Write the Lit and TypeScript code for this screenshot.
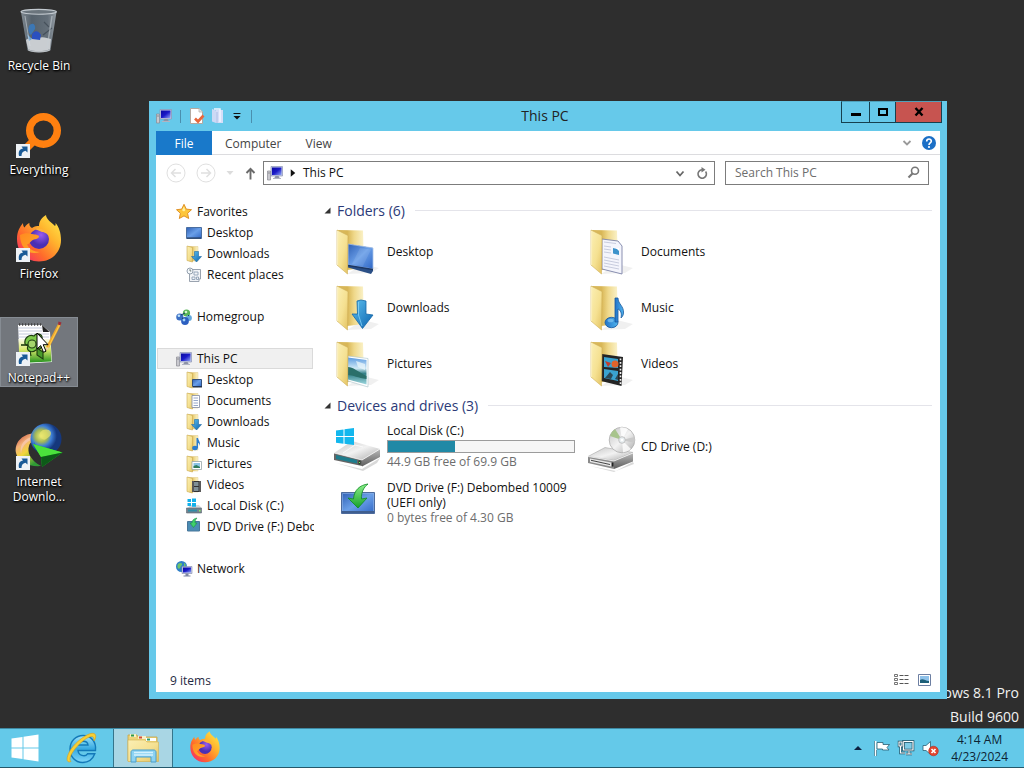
import { LitElement, html, css, svg, nothing } from "lit";
import { customElement, state } from "lit/decorators.js";
import { classMap } from "lit/directives/class-map.js";

/* ---------- shared gradients ---------- */
const defs = html`<svg class="defs" aria-hidden="true">
  <defs>
    <linearGradient id="flap" x1="0" y1="0" x2="1" y2="1"><stop offset="0" stop-color="#fbefb4" /><stop offset=".55" stop-color="#f5e192" /><stop offset="1" stop-color="#e3c262" /></linearGradient>
    <linearGradient id="back" x1="0" y1="0" x2="1" y2="0"><stop offset="0" stop-color="#d9b95e" /><stop offset=".36" stop-color="#d8b655" /><stop offset=".62" stop-color="#efd88a" /><stop offset="1" stop-color="#fbf3cc" /></linearGradient>
    <linearGradient id="screen" x1="0" y1="0" x2="1" y2="1"><stop offset="0" stop-color="#2e5fb4" /><stop offset=".5" stop-color="#6a9fe8" /><stop offset="1" stop-color="#2f66c4" /></linearGradient>
    <linearGradient id="blueArrow" x1="0" y1="0" x2="1" y2="1"><stop offset="0" stop-color="#5cc0f0" /><stop offset="1" stop-color="#0c63ae" /></linearGradient>
    <linearGradient id="photo" x1="0" y1="0" x2="0" y2="1"><stop offset="0" stop-color="#5c9be0" /><stop offset=".4" stop-color="#cfe9f6" /><stop offset=".6" stop-color="#2f7d84" /><stop offset="1" stop-color="#9fd8e0" /></linearGradient>
    <linearGradient id="metal" x1="0" y1="0" x2="1" y2="1"><stop offset="0" stop-color="#c4c4c4" /><stop offset=".5" stop-color="#f2f2f2" /><stop offset="1" stop-color="#aaaaaa" /></linearGradient>
    <linearGradient id="metalSide" x1="0" y1="0" x2="0" y2="1"><stop offset="0" stop-color="#b8b8b8" /><stop offset="1" stop-color="#5e5e5e" /></linearGradient>
    <linearGradient id="green" x1="0" y1="0" x2="0" y2="1"><stop offset="0" stop-color="#8cf08a" /><stop offset="1" stop-color="#16a02a" /></linearGradient>
    <linearGradient id="fox" x1="1" y1="0" x2="0" y2="1"><stop offset="0" stop-color="#fff14f" /><stop offset=".35" stop-color="#ffb52e" /><stop offset=".65" stop-color="#ff6b2b" /><stop offset="1" stop-color="#f0197a" /></linearGradient>
    <linearGradient id="foxHead" x1="0" y1="0" x2="1" y2="1"><stop offset="0" stop-color="#ff8a20" /><stop offset="1" stop-color="#ffab2a" /></linearGradient>
    <radialGradient id="violet" cx=".6" cy=".3"><stop offset="0" stop-color="#9a5cf0" /><stop offset="1" stop-color="#4a2fb4" /></radialGradient>
    <linearGradient id="glass" x1="0" y1="0" x2="1" y2="0"><stop offset="0" stop-color="#8f9aa3" /><stop offset=".3" stop-color="#5c6a76" /><stop offset=".75" stop-color="#6d7a86" /><stop offset="1" stop-color="#a8b2ba" /></linearGradient>
    <radialGradient id="globe" cx=".35" cy=".4"><stop offset="0" stop-color="#eef07a" /><stop offset=".4" stop-color="#a3b856" /><stop offset=".65" stop-color="#3d7fd8" /><stop offset="1" stop-color="#15377c" /></radialGradient>
    <linearGradient id="rainbow" x1="0" y1="0" x2=".6" y2="1"><stop offset="0" stop-color="#b8322e" /><stop offset=".35" stop-color="#f3b27a" /><stop offset=".6" stop-color="#f2d63c" /><stop offset="1" stop-color="#2f9a35" /></linearGradient>
    <linearGradient id="grass" x1="0" y1="0" x2="0" y2="1"><stop offset="0" stop-color="#fbfbe8" /><stop offset=".45" stop-color="#d7e86a" /><stop offset="1" stop-color="#1f8f1c" /></linearGradient>
    <linearGradient id="ie" x1="0" y1="0" x2="0" y2="1"><stop offset="0" stop-color="#9fe4fb" /><stop offset=".5" stop-color="#35a9e0" /><stop offset="1" stop-color="#7fd6f8" /></linearGradient>
    <linearGradient id="note" x1="0" y1="0" x2="1" y2="0"><stop offset="0" stop-color="#2273c8" /><stop offset="1" stop-color="#4fb4ee" /></linearGradient>
    <linearGradient id="monitor" x1="0" y1="0" x2="1" y2="1"><stop offset="0" stop-color="#0a0aa0" /><stop offset=".5" stop-color="#1a1ac8" /><stop offset="1" stop-color="#8fa4f4" /></linearGradient>
  </defs>
</svg>`;

const icon = (size: number, box: number, body: unknown) =>
  html`<svg class="ic" width=${size} height=${size} viewBox="0 0 ${box} ${box}" aria-hidden="true">${body}</svg>`;

/* ---------- large folder icons ---------- */
const folderBack = svg`<path d="M14 46 L38 45 L46 40 L30 36Z" fill="#000" opacity=".06"/><path d="M5 2 L30 2.5 L31 40 L14 42 Z" fill="url(#back)"/>`;
const folderFlap = svg`<path d="M4 2 L15 7.5 L14.5 46 L4 37Z" fill="url(#flap)" stroke="#cfae58" stroke-width=".6"/><path d="M4.6 3 V37" stroke="#fff6cf" stroke-width=".8"/>`;
const overlays: Record<string, unknown> = {
  Desktop: svg`<path d="M15 16 L40 20 V43 L38 46 L15 39.5Z" fill="#2a4f86"/><path d="M15 16 L40 20 V41 L15 37Z" fill="url(#screen)" stroke="#a9c4ea" stroke-width=".8"/><path d="M15 37.5 L40 41.5" stroke="#1b3765" stroke-width="1.6"/><path d="M27 20 L38 21.5 L30 38 L19 36Z" fill="#fff" opacity=".1"/>`,
  Downloads: svg`<path d="M24 17 L28 16 L33 17 V30 L40 31 L29.5 44.5 L19 30 L24.5 30Z" fill="url(#blueArrow)" stroke="#1568a8" stroke-width=".8"/><path d="M25.5 18 V31 L29 42" stroke="#8edcff" stroke-width="1" fill="none" opacity=".7"/>`,
  Pictures: svg`<path d="M15 16 L35 18.5 V47 L15 41Z" fill="#fff" stroke="#aac3c9" stroke-width=".6"/><path d="M15 17.500 L33.500 20 V44.500 L15 39.500Z" fill="url(#photo)"/><path d="M15 27 C20 27 24 31 33.500 36 V39 C25 38 20 35 15 35Z" fill="#2a6f6a"/><path d="M23 21 L32 24 V30 L25 27Z" fill="#e9f5fb" opacity=".75"/>`,
  Documents: svg`<path d="M15 11 L31 13 L35 18 V46 L15 41Z" fill="#f4f5fc" stroke="#7d83a8" stroke-width=".9"/><path d="M17 14 L29 15.500 M17 18 L24 19 M17 21 L24 22 M17 24 L24 25 M17 29 L32 32 M17 32 L32 35 M17 35 L32 38 M17 38 L32 41" stroke="#c3c7da" stroke-width=".9"/><path d="M26 20 L32 21.500 V27 L26 25.500Z" fill="#3c92cb"/><path d="M29 20 h3 v3z" fill="#fff"/>`,
  Music: svg`<ellipse cx="24.500" cy="38.500" rx="6.500" ry="5.200" fill="url(#note)" stroke="#16579c" stroke-width=".8"/><path d="M28 38 V14 L31 14 C31 20 37 22 36.500 29 C36.300 32 34.500 33.500 34 34 C35 29 33.500 26 31 25 V38Z" fill="url(#note)" stroke="#16579c" stroke-width=".8"/><ellipse cx="23.500" cy="36.500" rx="3" ry="1.800" fill="#8fd0f6" opacity=".6"/>`,
  Videos: svg`<path d="M15 14 L36 17 L34.500 46 L14 41Z" fill="#242424"/><path d="M17 17 L31 19 V28 L17 27Z M17 29 L31 31 V41 L17 38Z" fill="#3aa3d0"/><circle cx="28" cy="24" r="3.500" fill="#e0632a"/><path d="M18 21 l6 2 -3 4z" fill="#c23c2c"/><path d="M18 38 l5-6 3 3 -2 4z M28 39 l3-5 v6z" fill="#2d4a57"/><path d="M33.500 18.500 V45" stroke="#f2f2f2" stroke-width="1.600" stroke-dasharray="1.800 1.600"/>`,
};
const bigFolder = (n: string) => icon(48, 48, svg`${folderBack}${n === "Documents" || n === "Desktop" || n === "Pictures" || n === "Videos" ? svg`${overlays[n]}${folderFlap}` : svg`${folderFlap}${overlays[n]}`}`);

const winLogo = svg`<path d="M3 7.500 L10.500 6.500 V13 H3Z M11.500 6.300 L21 5 V13 H11.500Z M3 14 H10.500 V20.700 L3 19.700Z M11.500 14 H21 V22 L11.500 20.800Z" fill="#12b7ee"/>`;
const bigDisk = icon(48, 48, svg`
  <path d="M3 40 L29 46 L47 35 L44 40 L30 48Z" fill="#000" opacity=".15"/>
  <path d="M1 30 L19 18 L47 26 L29 37Z" fill="url(#metal)"/><path d="M1 30 L29 37 V43 L1 37Z" fill="#666"/><path d="M3 32 L24 37 V40.500 L3 36Z" fill="#1f7c8c"/><path d="M29 37 L47 26 V34 L29 43.500Z" fill="url(#metalSide)"/><path d="M25.500 37.500 h2 v4 h-2z" fill="#2b3b2b"/><path d="M26 39 h1 v1 h-1z" fill="#6dff4f"/><path d="M1 30 L29 37 L47 26" fill="none" stroke="#fff" stroke-width=".7"/><path d="M10 30 L22 22 L30 24" stroke="#fff" fill="none" opacity=".7"/>${winLogo}`);
const bigCd = icon(48, 48, svg`
  <path d="M3 43 L27 49 L46 39 L47 41 L29 48Z" fill="#000" opacity=".15"/>
  <path d="M1 33.500 L18 24.500 L46 29.500 L27 37.500Z" fill="url(#metal)" stroke="#9a9a9a" stroke-width=".5"/>
  <circle cx="35" cy="17" r="12.800" fill="url(#metal)" stroke="#a6a6a6" stroke-width=".7"/><path d="M35 17 L23 13 A12.800 12.800 0 0 1 28 6Z" fill="#a8c48c"/><path d="M35 17 L33 4.500 A12.800 12.800 0 0 1 41 6Z M35 17 L44 26 A12.800 12.800 0 0 1 36 29.500Z" fill="#fff" opacity=".8"/><path d="M35 17 L47.500 14 A12.800 12.800 0 0 1 47.500 20Z" fill="#c9c9c9"/><circle cx="35" cy="17" r="3.300" fill="#e8eef0" stroke="#b5b5b5" stroke-width=".8"/><circle cx="35" cy="17" r="1.300" fill="#fff"/>
  <path d="M1 33.500 L27 38 V46 L1 40Z" fill="#8b8b8b"/><path d="M3 35.500 L24 39.500 V43.500 L3 39Z" fill="#e8e8e8"/><path d="M4 37.300 L23 41.500" stroke="#444" stroke-width="1"/><path d="M27 38 L46 30 V38.500 L27 46Z" fill="url(#metalSide)"/><path d="M25 39.500 h1.500 v4 h-1.500z" fill="#222"/><path d="M1 33.500 L27 38 L46 30" fill="none" stroke="#fafafa" stroke-width=".7"/>`);
const bigDvd = icon(48, 48, svg`
  <path d="M8.500 13.500 H41.500 V34.500 H8.500Z" fill="url(#screen)" stroke="#4c6a9c"/><path d="M9.500 14.500 H40.500 V33.500 H9.500Z" fill="none" stroke="#8fb2e6" stroke-width=".6"/><path d="M9 32 H41 V34 H9Z" fill="#3f5e8f"/>
  <path d="M35 5 C27 6 21 11 20.500 20 L15 19 L25 29 L34 19 L28.500 20 C28 13 31 8 35 5Z" fill="url(#green)" stroke="#0e8a24" stroke-width=".8"/>`);

/* ---------- 16px icons ---------- */
const smallFolder = svg`<path d="M2 .500 H12 V15 H3Z" fill="url(#back)" stroke="#dcc177" stroke-width=".4"/><path d="M1 0 L6.500 1.500 V16 L1 14.500Z" fill="url(#flap)" stroke="#cba94e" stroke-width=".6"/>`;
const smallOver: Record<string, unknown> = {
  Desktop: svg`<path d="M6.500 7.500 H15.500 V14.500 H6.500Z" fill="url(#screen)" stroke="#33507c"/><path d="M7 14 h9 v1.500 h-9z" fill="#23344e"/>`,
  Documents: svg`<path d="M6 2.500 H13.500 V14.500 H6Z" fill="#fff" stroke="#8d95ab" stroke-width=".9"/><path d="M7.500 5 h4.500 M7.500 7.500 h4.500 M7.500 10 h4.500 M7.500 12.500 h4.500" stroke="#7e93bd" stroke-width=".8"/>`,
  Downloads: svg`<path d="M8.500 5.500 h4 v5 h3 L10.500 16 L5.500 10.500 h3Z" fill="url(#blueArrow)" stroke="#1c6aa6" stroke-width=".6"/>`,
  Music: svg`<ellipse cx="9" cy="13" rx="2.800" ry="2.200" fill="#2a7cce"/><path d="M10.500 13 V3 h1.500 C12.500 6 15 7 13.500 11 C13.500 9 13 8 12 8 V13Z" fill="#2a7cce"/>`,
  Pictures: svg`<path d="M6 5.500 H15.500 V13.500 H6Z" fill="#fff" stroke="#98a6a8" stroke-width=".8"/><path d="M7.500 7 h6.500 v5 h-6.500z" fill="#8cc4e6"/><path d="M7.500 10 l3-1 3.500 2 v1 h-6.500z" fill="#2f7c5c"/>`,
  Videos: svg`<path d="M6 4 H15 V15 H6Z" fill="#333"/><path d="M8 5 h4.500 v4 h-4.500z M8 10 h4.500 v4 h-4.500z" fill="#7f8f96"/><path d="M14 4.500 V15 M7 4.500 V15" stroke="#ddd" stroke-width=".9" stroke-dasharray="1 1"/>`,
};
const folder16 = (n: string) => icon(16, 16, svg`${smallFolder}${smallOver[n]}`);
const pc = icon(16, 16, svg`<path d="M.500 6 h3 v9 h-3z" fill="#c9c9cf" stroke="#8a8a92" stroke-width=".7"/><path d="M1.500 8 h1" stroke="#555"/><path d="M4 1.500 H15.500 V11 H4Z" fill="#c4cbe8" stroke="#8b93b4" stroke-width=".7"/><path d="M5 2.500 H14.500 V10 H5Z" fill="url(#monitor)"/><path d="M8.500 11 h3 l1.500 2.500 h-6z" fill="#8d93a6"/><path d="M6 13.500 h8" stroke="#b0b4c2"/>`);
const star = icon(16, 16, svg`<path d="M8 .300 L10.300 5.100 L15.500 5.700 L11.600 9.300 L12.700 14.500 L8 11.900 L3.300 14.500 L4.400 9.300 L.500 5.700 L5.700 5.100Z" fill="#fdc63a" stroke="#dd8a1d" stroke-width=".9"/><path d="M8 2.500 L9.300 6.200 L8 7.500 L6 6.300Z" fill="#fff0a0"/>`);
const desk16 = icon(16, 16, svg`<path d="M.500 2.500 H15.500 V13.500 H.500Z" fill="url(#screen)" stroke="#4a6ea0"/><path d="M1 13 H15" stroke="#20334f"/>`);
const recent16 = icon(16, 16, svg`<path d="M5 2.500 H14.500 V12 H13 V14.500 H3.500 V5" fill="#f2f4f7" stroke="#8f99a6" stroke-width=".9"/><path d="M8 5 h4 v3 h-4z M6 10 h3 v2.500 h-3z M10.500 10 h2 v2.500 h-2z" fill="none" stroke="#8fa0b4" stroke-width=".9"/><circle cx="4" cy="4" r="3" fill="#f4f8fb" stroke="#8a97a6" stroke-width=".9"/><path d="M4 2.200 V4 H5.300" fill="none" stroke="#566" stroke-width=".8"/>`);
const home16 = icon(16, 16, svg`<circle cx="10.500" cy="4" r="3.600" fill="#59b457"/><circle cx="3.800" cy="8" r="3.600" fill="#3b6fc4"/><circle cx="13" cy="9" r="2.900" fill="#63a8dc"/><circle cx="9" cy="12" r="3.900" fill="#2c5fc0"/><path d="M5 6 L9 4 M6 9 L8 10 M12 6 L13 7" stroke="#123a66"/><circle cx="10" cy="3" r="1.300" fill="#d9f6cf"/><circle cx="2.900" cy="6.800" r="1.300" fill="#bfe3fb"/><circle cx="8" cy="11" r="1.400" fill="#a3d6fa"/>`);
const disk16 = icon(16, 16, svg`<path d="M2 10 L4 7 H13 L15.500 10Z" fill="#d5d8dc"/><path d="M.500 10 H15.500 V15 H.500Z" fill="#75838f" stroke="#5a6670" stroke-width=".6"/><path d="M2 11.500 h9 v2 h-9z" fill="#2f8ca6"/><path d="M13 12 h1.500 v1.500 h-1.500z" fill="#8bf060"/><path d="M1.500 1 h3.500 v3 h-3.500z M6 .500 h4 v3.500 h-4z M1.500 5 h3.500 v3 h-3.500z M6 5 h4 v3.700 h-4z" fill="#12b0ea"/>`);
const dvd16 = icon(16, 16, svg`<path d="M1.500 2.500 H13.500 V12 H1.500Z" fill="#4a8cb4" stroke="#48769a"/><path d="M11 -1 C7.500 -.500 6 1.500 6 4 H4 L7.500 8.500 L11 4 H9 C9 2 9.500 .500 11 -1Z" fill="#3fd06a" stroke="#17893c" stroke-width=".5"/>`);
const net16 = icon(16, 16, svg`<circle cx="5.500" cy="5.500" r="5.500" fill="#2f7fc8"/><path d="M2 3 C4 1 7 2 6 4 C4 5 5 7 3 8 C1 7 1 5 2 3Z M8 1.500 L10 4 L8 6Z" fill="#6cc46a"/><path d="M6 5.500 H16 V12.500 H6Z" fill="#c6cdea" stroke="#8088a8" stroke-width=".6"/><path d="M7 6.500 H15 V11.500 H7Z" fill="url(#monitor)"/><path d="M9.500 12.500 h3 v2 h2 v1 h-7 v-1 h2z" fill="#7c86a4"/>`);

/* ---------- desktop icons ---------- */
const shortcut = svg`<path d="M1 32 H15 V46 H1Z" fill="#eef2f6"/><path d="M4 44 C3 39 5 37 8 36.500 L6.500 34.500 H12.500 V40.500 L10.500 38.800 C7.500 39.500 6.500 41 6.500 44Z" fill="#1a5a96"/>`;
const firefox = svg`
  <path d="M2 23 C2 15 5 11 8 7 C8 9 8.500 10.500 9.500 11.500 C11 9 13 7.500 14.500 7 C14 9 15 11 17 12 C20 10 22 10 24 10 C24 5 27 1.500 31 -1 C31 3 37 7 40 10 C41 9 40.500 8 40.500 7 C44 11 46 17 46 24 C46 37 36 45.500 24 45.500 C11 45.500 2 36 2 23Z" fill="url(#fox)"/>
  <circle cx="24" cy="23" r="10" fill="url(#violet)"/>
  <path d="M5 19 C9 17 13 17 17 18 C21 18.500 24 19 24 20.500 C24 23 19 23 17 24.500 C15 26 14 28 12 28.500 C14 33 19 36 25 36 C14 40 5 32 5 19Z" fill="url(#foxHead)"/>
  <path d="M20 13 C26 11 33 14 34.500 21 C33 18.500 30 16 27 16Z" fill="#ffb43a"/>`;
const notepad = svg`
  <path d="M3 5 H27 L35 12 L37 42 L5 44Z" fill="#fff"/><path d="M27 5 L28 12 L34.500 12Z" fill="#222"/><path d="M3 8 h24 M3 11 h24 M3 14 h31 M3 17 h31" stroke="#b5bcd0" stroke-width=".8"/>
  <path d="M3.500 19 H35.500 L36.500 41.500 L4.500 43Z" fill="url(#grass)"/>
  <path d="M4 4.500 h24" stroke="#444" stroke-width="2.400" stroke-dasharray="1.200 1.800"/>
  <path d="M10 24 C9 18 14 14 19 16 C21 12 28 14 27 19 C30 24 26 30 21 30 C16 34 11 30 13 26Z" fill="#7cc84a" stroke="#1e3d10" stroke-width="1.200"/><circle cx="17" cy="24" r="4" fill="#a5d66c" stroke="#1e3d10" stroke-width="1.100"/><path d="M6 25 h7" stroke="#1e3d10" stroke-width="1.600"/><path d="M22 28 l6 4 v7 l-6-4z" stroke="#1e3d10" stroke-width="1.100" fill="#4a9a2c"/><path d="M15 31 l1 5" stroke="#1e3d10" stroke-width="1.200"/>
  <path d="M43.500 3 L46 4.500 L34 28 L31.500 31 L31 27Z" fill="#f0a92a"/><path d="M45 4 L33 28" stroke="#ffd860" stroke-width=".8"/><path d="M43.500 1.500 L46.500 2.500 L45.500 5.500 L43 4.500Z" fill="#9a2f3c"/><path d="M31 27 L34 28 L31.500 31Z" fill="#e8d6b0"/>`;
const bin = svg`
  <path d="M6 4 L12.500 42 C15 45 33 45 35.500 42 L41.500 4Z" fill="url(#glass)" opacity=".85"/>
  <path d="M11 32 C14 29 19 32 23 30 C28 28 32 30 36 31 L35 41 C30 44 17 44 13 41Z" fill="#c9cdd1"/>
  <path d="M14 18 C17 14 21 16 20 21 L16 27 C13 25 13 21 14 18Z" fill="#3c77b4"/><path d="M17 27 C19 21 24 23 26 27 L25 32 L17 31Z" fill="#2a50c0"/><path d="M12 26 l5 5 -3 2z" fill="#6fa4d2"/>
  <path d="M29 14 L34 19 M37 20 L28 27" stroke="#3b4650" stroke-width="1.200" opacity=".7"/>
  <path d="M37 8 L32 40" stroke="#c8d0d6" stroke-width="1.400" opacity=".55"/><path d="M10 8 L15 38" stroke="#dfe5ea" stroke-width="1" opacity=".5"/>
  <ellipse cx="23.700" cy="3.800" rx="17.700" ry="2.400" fill="#6b757d" stroke="#c3cad0" stroke-width="1.100"/>
  <path d="M13 41.500 C16 44.500 32 44.500 35 41.500" fill="none" stroke="#b9bec2" stroke-width="1.500"/>`;
const everything = svg`<circle cx="28.500" cy="18.500" r="13.800" fill="none" stroke="#ff8010" stroke-width="7.400"/><path d="M19.500 28 L12 35.500" stroke="#ff8010" stroke-width="8"/>`;
const idm = svg`
  <path d="M22 9 C8 9 -1 18 1 29 C3 38 14 43 26 42 C15 36 12 28 14 22 C15 18 19 15 24 15Z" fill="url(#rainbow)"/><path d="M20 12 C9 14 4 21 6 30 C7 21 13 16 20 15Z" fill="#f8c8b0" opacity=".8"/>
  <circle cx="31" cy="15" r="15.500" fill="url(#globe)"/><path d="M19 18 C21 24 27 28 36 29 C28 31 20 27 19 18Z" fill="#10234a" opacity=".5"/><path d="M28 6 C34 4 38 8 35 12 C32 14 30 18 26 14 C23 11 25 8 28 6Z" fill="#e8e46c" opacity=".7"/>
  <path d="M18 20 L47.500 28.500 L27 43 L26 33Z" fill="#27c22c"/><path d="M18 20 L47.500 28.500 L26 33Z" fill="#4be23c"/><path d="M26 33 L47.500 28.500 L27 43Z" fill="#0d5a18"/>`;
const cursor = html`<svg class="cursor" width="13" height="22" viewBox="0 0 13 22" aria-hidden="true"><path d="M1 1 V17 L4.700 13.600 L7.500 20.300 L10 19.200 L7.200 12.700 H12Z" fill="#fff" stroke="#000" stroke-width="1" /></svg>`;

interface Shortcut { label: string; art: unknown; link: boolean; }
const shortcuts: Shortcut[] = [
  { label: "Recycle Bin", art: bin, link: false },
  { label: "Everything", art: everything, link: true },
  { label: "Firefox", art: firefox, link: true },
  { label: "Notepad++", art: notepad, link: true },
  { label: "Internet Downlo...", art: idm, link: true },
];

interface Place { label: string; art: unknown; children: { label: string; art: unknown }[]; }
const places: Place[] = [
  { label: "Favorites", art: star, children: [
    { label: "Desktop", art: desk16 }, { label: "Downloads", art: folder16("Downloads") }, { label: "Recent places", art: recent16 }] },
  { label: "Homegroup", art: home16, children: [] },
  { label: "This PC", art: pc, children: [
    ...["Desktop", "Documents", "Downloads", "Music", "Pictures", "Videos"].map((label) => ({ label, art: folder16(label) })),
    { label: "Local Disk (C:)", art: disk16 }, { label: "DVD Drive (F:) Debombed 10009", art: dvd16 }] },
  { label: "Network", art: net16, children: [] },
];

interface Drive { label: string; art: unknown; used?: number; free?: string; }
const drives: Drive[] = [
  { label: "Local Disk (C:)", art: bigDisk, used: 36, free: "44.9 GB free of 69.9 GB" },
  { label: "CD Drive (D:)", art: bigCd },
  { label: "DVD Drive (F:) Debombed 10009 (UEFI only)", art: bigDvd, free: "0 bytes free of 4.30 GB" },
];

@customElement("app-root")
export class AppRoot extends LitElement {
  @state() private selected = "Notepad++";
  @state() private place = "This PC";

  static styles = css`
    :host { display: grid; grid-template-rows: 1fr 40px; height: 100vh; overflow: hidden; background: #2e2e2e; color: #111; font: 12px/15px "Open Sans", "Noto Sans", sans-serif; }
    * { box-sizing: border-box; }
    .defs { position: absolute; width: 0; height: 0; }
    a { color: inherit; text-decoration: none; }
    button { font: inherit; color: inherit; background: none; border: 0; padding: 0; margin: 0; display: flex; align-items: center; justify-content: center; }
    .ic { display: block; flex: none; overflow: visible; }
    .desktop { position: relative; min-height: 0; }
    .shortcuts { display: flex; flex-direction: column; gap: 34px; padding-top: 5px; width: 78px; }
    .shortcut { position: relative; display: flex; flex-direction: column; align-items: center; gap: 2px; height: 70px; padding: 3px 1px 0 1px; color: #fff; text-align: center; text-shadow: 0 1px 2px #000, 1px 1px 2px #000; }
    .shortcut span { width: 64px; }
    .shortcut.on { background: #73777d; box-shadow: inset 0 0 0 1px #868c93; }
    .cursor { position: absolute; left: 36px; top: 15px; }
    .mark { position: absolute; right: 5px; bottom: -1px; color: #f2f2f2; font-size: 14px; line-height: 24px; text-align: right; }
    .mark p { margin: 0; }

    .window { position: absolute; inset: 101px 77px 29px 149px; display: grid; grid-template-rows: 30px 24px 35px 1fr 22px; padding: 0 7px 7px; background: #66c9ea; }
    .title { display: grid; grid-template-columns: 1fr auto 1fr; align-items: start; margin-right: -2px; }
    .tools { display: flex; align-items: center; height: 30px; gap: 5px; }
    .tools i { width: 1px; height: 13px; background: #4a8fae; margin: 0 3px; }
    .title h1 { margin: 0 8px 0 0; font-size: 14px; line-height: 30px; font-weight: 400; color: #222; }
    .ctl { display: flex; justify-self: end; border: 1px solid #16404f; border-top-color: #4fa0ba; height: 22px; }
    .ctl button { width: 27px; }
    .ctl button + button { width: 26px; border-left: 1px solid #16404f; }
    .ctl .close.close { width: 46px; background: #c75450; }
    .tabs { display: flex; background: #fff; border-bottom: 1px solid #dcdcdf; color: #444; align-items: stretch; }
    .tab { padding: 2px 11px 0 13px; }
    .tabs .file { width: 56px; background: #1979ca; color: #fff; margin-bottom: -1px; }
    .tabs .end { display: flex; align-items: center; gap: 9px; margin-left: auto; padding-right: 4px; }
    .bar { display: flex; align-items: center; background: #fff; padding: 1px 11px 0 10px; }
    .go { display: flex; align-items: center; gap: 10px; margin-right: 6px; }
    .addr { flex: 1; display: flex; align-items: center; gap: 7px; height: 24px; border: 1px solid #7c7c7c; padding: 0 6px 1px 3px; }
    .addr .sp { flex: 1; }
    .addr .re { margin-left: 4px; }
    .search { display: flex; align-items: center; width: 204px; height: 24px; margin-left: 10px; border: 1px solid #7c7c7c; padding: 0 8px 1px 9px; }
    .search input { flex: 1; min-width: 0; border: 0; outline: 0; padding: 0; font: inherit; background: none; }
    .search input::placeholder { color: #6d6d6d; opacity: 1; }

    .body { display: grid; grid-template-columns: 158px 1fr; background: #fff; min-height: 0; }
    nav { display: flex; flex-direction: column; gap: 21px; padding-top: 11px; overflow: hidden; }
    .row { display: flex; align-items: center; gap: 5px; height: 21px; margin: 0 1px; padding-left: 18px; border: 1px solid transparent; white-space: nowrap; }
    .row.child { padding-left: 28px; margin-right: 0; }
    .row.on { background: #f0f0f0; border-color: #dadada; }
    main { padding: 7px 8px 0 10px; min-width: 0; overflow: hidden; }
    h2 { display: flex; align-items: center; gap: 6px; margin: 0; height: 27px; font-size: 14px; line-height: 20px; font-weight: 400; color: #2b3a78; }
    h2::after { content: ""; flex: 1; height: 1px; margin-left: 4px; background: #e4e4ea; }
    .tiles { display: grid; grid-template-columns: repeat(auto-fill, 254px); padding-left: 9px; }
    .tile { display: flex; align-items: center; gap: 6px; height: 56px; padding-right: 12px; }
    .tile div { flex: 1; padding-bottom: 2px; }
    .tile p { margin: 0; }
    .free { color: #6d6d6d; }
    .meter { display: block; height: 13px; margin: 2px 0 1px; border: 1px solid #9c9c9c; background: #f6f6f6; }
    .meter b { display: block; height: 100%; background: #2089a6; }
    .status { display: flex; align-items: center; justify-content: space-between; background: #fff; padding: 0 8px 2px 14px; color: #1f2a44; }
    .status div { display: flex; gap: 7px; }

    .taskbar { display: flex; background: #64c9e9; border-top: 1px solid #3f8aa4; border-bottom: 1px solid #24586b; }
    .apps { display: flex; }
    .app { width: 60px; }
    .apps .start { width: 50px; }
    .apps .ie { width: 63px; }
    .apps .fox { width: 64px; }
    .app.cur { background: #a9d6e4; border: solid #35758b; border-width: 0 1px; }
    .tray { display: flex; align-items: center; margin-left: auto; gap: 8px; padding-right: 16px; color: #0c2433; }
    .clock { line-height: 17px; text-align: center; margin-left: 5px; }
    .tray .up { margin-right: 4px; }
  `;

  private renderWindow() {
    return html`<section class="window" aria-label="This PC">
      <header class="title">
        <div class="tools">
          ${pc}<i></i>
          <button aria-label="Properties">${icon(16, 16, svg`<path d="M1.500 .500 H10 L13.500 4 V15.500 H1.500Z" fill="#fff" stroke="#b4a9a0"/><path d="M10 .500 V4 H13.500" fill="#e6e6e6" stroke="#b4a9a0" stroke-width=".7"/><path d="M6 10.500 L9 13.500 L14.500 7.500" fill="none" stroke="#e8673c" stroke-width="2.600"/>`)}</button>
          <button aria-label="New folder">${icon(16, 16, svg`<path d="M2 1 L6 2.500 V15 L2 13.500Z" fill="#cdd9f5"/><path d="M6 2 H13 V15 H6Z" fill="#d6def8"/><path d="M4 1 H10 V14" fill="none" stroke="#f3f5ff" stroke-width="1.500"/><path d="M7 4 V15" stroke="#a9bce4"/>`)}</button>
          <button aria-label="Customize toolbar">${icon(12, 12, svg`<path d="M2.500 3.500 H9.500" stroke="#111" stroke-width="1"/><path d="M2.500 6 H9.500 L6 9.500Z" fill="#111"/>`)}</button><i></i>
        </div>
        <h1>This PC</h1>
        <div class="ctl">
          <button aria-label="Minimize">${icon(12, 12, svg`<path d="M1 7 H11 V10 H1Z" fill="#000"/>`)}</button>
          <button aria-label="Maximize">${icon(12, 12, svg`<path d="M2 3 H10 V9 H2Z" fill="none" stroke="#000" stroke-width="2"/>`)}</button>
          <button class="close" aria-label="Close">${icon(12, 12, svg`<path d="M2.500 2 L9.500 9.500 M9.500 2 L2.500 9.500" stroke="#000" stroke-width="2.400"/>`)}</button>
        </div>
      </header>
      <div class="tabs">
        <button class="file">File</button><button class="tab">Computer</button><button class="tab">View</button>
        <div class="end">
          <button aria-label="Expand ribbon">${icon(12, 12, svg`<path d="M2.500 4 L6 7.500 L9.500 4" fill="none" stroke="#9a9a9a" stroke-width="1.800"/>`)}</button>
          <button aria-label="Help">${icon(14, 14, svg`<circle cx="7" cy="7" r="7" fill="#1b6fc6"/><path d="M4.700 5.400 C4.700 2.200 9.400 2.300 9.300 5.200 C9.200 6.900 7 6.900 7 8.900" fill="none" stroke="#fff" stroke-width="1.600"/><circle cx="7" cy="11" r="1.100" fill="#fff"/>`)}</button>
        </div>
      </div>
      <div class="bar">
        <div class="go">
          <button aria-label="Back">${icon(20, 20, svg`<circle cx="10" cy="10" r="9" fill="none" stroke="#e0e0e0"/><path d="M15 10 H6 M9.500 6 L5.500 10 L9.500 14" fill="none" stroke="#e0e0e0" stroke-width="1.500"/>`)}</button>
          <button aria-label="Forward">${icon(20, 20, svg`<circle cx="10" cy="10" r="9" fill="none" stroke="#e0e0e0"/><path d="M5 10 H14 M10.500 6 L14.500 10 L10.500 14" fill="none" stroke="#e0e0e0" stroke-width="1.500"/>`)}</button>
          <button aria-label="Recent locations">${icon(8, 8, svg`<path d="M.500 2 H7.500 L4 6Z" fill="#dcdcdc"/>`)}</button>
          <button aria-label="Up">${icon(13, 13, svg`<path d="M6.500 12.500 V2 M2.500 6 L6.500 1.800 L10.500 6" fill="none" stroke="#6a6a6a" stroke-width="1.900"/>`)}</button>
        </div>
        <div class="addr">
          ${pc}${icon(6, 8, svg`<path d="M1 -1 L7 4 L1 9Z" fill="#111"/>`)}<a href="#">This PC</a><span class="sp"></span>
          <button aria-label="Previous locations">${icon(10, 10, svg`<path d="M1.500 3.500 L5 7.500 L8.500 3.500" fill="none" stroke="#666" stroke-width="1.800"/>`)}</button>
          <button class="re" aria-label="Refresh">${icon(12, 12, svg`<path d="M9.600 4.500 A4.200 4.200 0 1 1 6 2.800" fill="none" stroke="#777" stroke-width="1.600"/><path d="M5.500 0 L9.500 2.800 L5.500 5.600Z" fill="#777"/>`)}</button>
        </div>
        <label class="search"><input type="search" placeholder="Search This PC" aria-label="Search This PC" />
          ${icon(13, 13, svg`<circle cx="8" cy="4.800" r="3.500" fill="none" stroke="#777" stroke-width="1.600"/><path d="M5.500 7.500 L1.500 11.500" stroke="#777" stroke-width="2.200"/>`)}
        </label>
      </div>
      <div class="body">
        <nav>
          ${places.map((p) => html`<div>
            <a href="#" class=${classMap({ row: true, on: this.place === p.label })} @click=${() => (this.place = p.label)}>${p.art}<span>${p.label}</span></a>
            ${p.children.map((c) => html`<a href="#" class="row child">${c.art}<span>${c.label}</span></a>`)}
          </div>`)}
        </nav>
        <main>
          ${this.renderHeading("Folders (6)")}
          <div class="tiles">
            ${["Desktop", "Documents", "Downloads", "Music", "Pictures", "Videos"].map((n) => html`<a href="#" class="tile">${bigFolder(n)}<div>${n}</div></a>`)}
          </div>
          ${this.renderHeading("Devices and drives (3)")}
          <div class="tiles">
            ${drives.map((d) => html`<a href="#" class="tile">${d.art}<div>
              <p>${d.label}</p>
              ${d.used === undefined ? nothing : html`<span class="meter" role="meter" aria-label="Used space" aria-valuenow=${d.used}><b style="width:${d.used}%"></b></span>`}
              ${d.free ? html`<p class="free">${d.free}</p>` : nothing}
            </div></a>`)}
          </div>
        </main>
      </div>
      <footer class="status"><span>9 items</span>
        <div>
          <button aria-label="Details view">${icon(16, 16, svg`<path d="M1.500 2.500 h3 v2 h-3z M1.500 6.500 h3 v2 h-3z M1.500 10.500 h3 v2 h-3z" fill="none" stroke="#666" stroke-width=".9"/><path d="M6.500 3.500 h4 M11.500 3.500 h4 M6.500 7.500 h4 M11.500 7.500 h4 M6.500 11.500 h4 M11.500 11.500 h4" stroke="#555" stroke-width="1.100"/>`)}</button>
          <button aria-label="Large icons view">${icon(16, 16, svg`<path d="M2.500 2.500 H14.500 V13.500 H2.500Z" fill="#fff" stroke="#6d7fa2"/><path d="M4 4 H13 V11 H4Z" fill="#8fc2ea"/><path d="M4 8 C7 6 9 9 13 9 V11 H4Z" fill="#1d5f78"/>`)}</button>
        </div>
      </footer>
    </section>`;
  }

  private renderHeading(text: string) {
    return html`<h2>${icon(7, 7, svg`<path d="M6.500 .500 V6.500 H.500Z" fill="#333"/>`)}${text}</h2>`;
  }

  private renderTaskbar() {
    return html`<footer class="taskbar">
      <div class="apps">
        <button class="app start" aria-label="Start">${icon(28, 28, svg`<path d="M.500 4.500 L11.500 3 V13.500 H.500Z M12.500 2.800 L27.500 .500 V13.500 H12.500Z M.500 14.500 H11.500 V25 L.500 23.500Z M12.500 14.500 H27.500 V27.500 L12.500 25.200Z" fill="#fff"/>`)}</button>
        <button class="app ie" aria-label="Internet Explorer">${icon(32, 32, svg`<path d="M29.500 18.500 H12 C12.500 23.500 19 25.500 21.500 21.800 H28.800 C26.500 28 21.500 30.500 16.500 30.500 C9 30.500 4 24.500 4 17 C4 9 10 3.500 17 3.500 C25 3.500 30.500 10 29.500 18.500Z M12 13 H22 C21.500 8 13 8 12 13Z" fill="url(#ie)" stroke="#1379b8" stroke-width="1.400" fill-rule="evenodd"/><path d="M5 29.500 C-1 32 0 23 7 14.500 C14 6.500 23.500 0 28 1.500 C31 2.800 29.500 7 28 9 C28 6 27.500 4 25 4.500 C20 5.500 12 12.500 7.500 19 C4 24 3 28 5 29.500Z" fill="#f7cf35" stroke="#d79f1a" stroke-width=".6"/>`)}</button>
        <button class="app cur" aria-label="File Explorer">${icon(34, 34, svg`<path d="M2 4 L11 4 L12 6 H31 V30 H2Z" fill="#eed47a" stroke="#c7a548" stroke-width=".8"/><path d="M4 3 H10 V6 H4Z" fill="#f6f0c8"/><path d="M5 3.500 h3 v2 h-3z" fill="#2f9a4a"/><path d="M12 5 H20 V8 H12Z" fill="#f6f0c8"/><path d="M13 5.500 h3 v2 h-3z" fill="#cf4a3a"/><path d="M20 7 H30 V10 H20Z" fill="#fff"/><path d="M21 7.500 h3 v2 h-3z" fill="#2c9c6a"/><path d="M2 9 H19 L21 11 H32.500 V30.500 H2Z" fill="url(#flap)" stroke="#d3b353" stroke-width=".6"/><path d="M5 31 V21 C5 20 6 19 7 19 H28 C29 19 30 20 30 21 V31 H25 V26 H10 V31Z" fill="#8cd2f2" stroke="#4a9fcc"/><path d="M8 21.500 H27 M8 24 H27" stroke="#d4f1fd" stroke-width="1.300"/>`)}</button>
        <button class="app fox" aria-label="Firefox">${icon(32, 48, firefox)}</button>
      </div>
      <div class="tray">
        <button class="up" aria-label="Show hidden icons">${icon(8, 8, svg`<path d="M0 6 L4 2 L8 6Z" fill="#0b2040"/>`)}</button>
        <button aria-label="Action Center">${icon(16, 16, svg`<path d="M1.500 1 V16" stroke="#fff" stroke-width="2"/><path d="M3 2.500 H9 V4.500 H15.500 L13 7.500 L15 10 H8.500 V9 H3Z" fill="#fff" stroke="#2c5f74" stroke-width=".8"/><path d="M.500 1 V16 M2.500 10 V16" stroke="#2c5f74" stroke-width=".6"/>`)}</button>
        <button aria-label="Network">${icon(16, 16, svg`<path d="M5.500 1.500 H15 V10 H5.500Z" fill="#7fcbe6" stroke="#1f4d60" stroke-width="2.600"/><path d="M5.500 1.500 H15 V10 H5.500Z" fill="none" stroke="#fff" stroke-width="1.200"/><path d="M8 14 H14 M11 11 V14 M1 2 H4 V6 H1Z M2.500 6 V13 H7" fill="none" stroke="#1f4d60" stroke-width="2.400"/><path d="M8 14 H14 M11 11 V14 M1 2 H4 V6 H1Z M2.500 6 V13 H7" fill="none" stroke="#fff" stroke-width="1.100"/>`)}</button>
        <button aria-label="Volume muted">${icon(16, 16, svg`<path d="M1 5.500 H4 L8.500 1.500 V14.500 L4 10.500 H1Z" fill="#fff" stroke="#2c5f74" stroke-width=".8"/><circle cx="11.500" cy="11" r="4.800" fill="#e2452f" stroke="#b52a1a" stroke-width=".6"/><path d="M9.500 9 L13.500 13 M13.500 9 L9.500 13" stroke="#fff" stroke-width="1.700"/>`)}</button>
        <div class="clock">4:14 AM<br />4/23/2024</div>
      </div>
    </footer>`;
  }

  render() {
    return html`${defs}
      <div class="desktop">
        <div class="shortcuts">
          ${shortcuts.map((s) => html`<a href="#" class=${classMap({ shortcut: true, on: this.selected === s.label })} @click=${() => (this.selected = s.label)}>
            ${icon(48, 48, svg`${s.art}${s.link ? shortcut : nothing}`)}<span>${s.label}</span>
            ${this.selected === s.label ? cursor : nothing}
          </a>`)}
        </div>
        <div class="mark"><p>Windows 8.1 Pro</p><p>Build 9600</p></div>
        ${this.renderWindow()}
      </div>
      ${this.renderTaskbar()}`;
  }
}
